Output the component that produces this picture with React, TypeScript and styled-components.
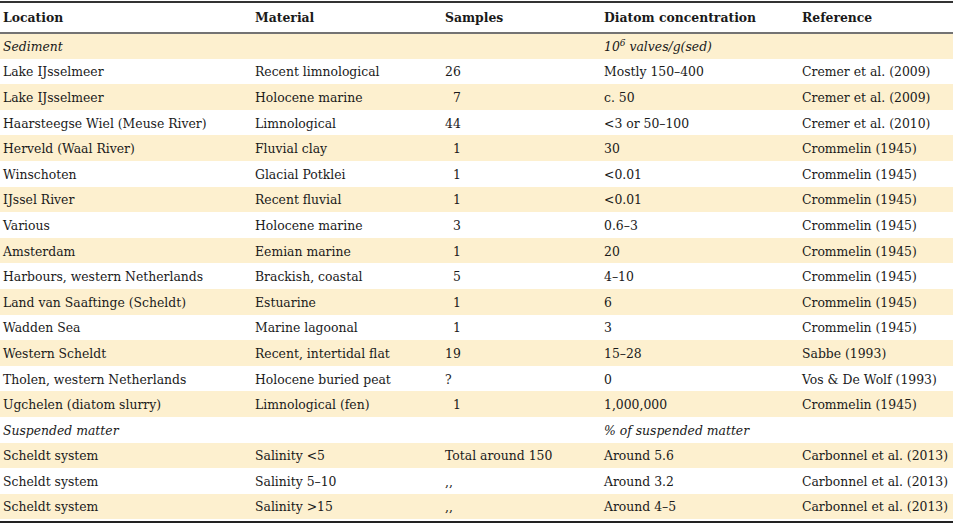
import React from "react";
import styled, { createGlobalStyle } from "styled-components";

const Global = createGlobalStyle`
  html, body { margin: 0; padding: 0; background: #fff; }
  body { font-family: "DejaVu Serif", "Liberation Serif", serif; color: #1a1a1a; }
`;

const Wrap = styled.div`
  width: 953px;
  padding-top: 1px;
`;

const Table = styled.table`
  width: 953px;
  border-collapse: collapse;
  table-layout: fixed;
  border-top: 2px solid #333;
  border-bottom: 2px solid #222;
  font-size: 12.4px;
`;

const Col = styled.col<{ $w: number }>`
  width: ${(p) => p.$w}px;
`;

const HeadRow = styled.tr`
  height: 31px;
  border-bottom: 2px solid #737373;
`;

const Th = styled.th`
  text-align: left;
  font-weight: bold;
  padding: 0 0 0 3px;
  white-space: nowrap;
`;

const Row = styled.tr<{ $alt: boolean }>`
  height: 25.6px;
  background: ${(p) => (p.$alt ? "#fdf0cf" : "#fff")};
`;

const Td = styled.td<{ $italic?: boolean }>`
  padding: 1px 0 0 3px;
  white-space: nowrap;
  font-style: ${(p) => (p.$italic ? "italic" : "normal")};
`;

const Gap = styled.tr`
  height: 3px;
`;

const Sup = styled.sup`
  font-size: 9px;
  line-height: 0;
`;

type R = [string, string, string, React.ReactNode, string, boolean?];

const unit = (
  <>
    10<Sup>6</Sup> valves/g(sed)
  </>
);

const F = "\u2007";

const rows: R[] = [
  ["Sediment", "", "", unit, "", true],
  ["Lake IJsselmeer", "Recent limnological", "26", "Mostly 150–400", "Cremer et al. (2009)"],
  ["Lake IJsselmeer", "Holocene marine", F + "7", "c. 50", "Cremer et al. (2009)"],
  ["Haarsteegse Wiel (Meuse River)", "Limnological", "44", "<3 or 50–100", "Cremer et al. (2010)"],
  ["Herveld (Waal River)", "Fluvial clay", F + "1", "30", "Crommelin (1945)"],
  ["Winschoten", "Glacial Potklei", F + "1", "<0.01", "Crommelin (1945)"],
  ["IJssel River", "Recent fluvial", F + "1", "<0.01", "Crommelin (1945)"],
  ["Various", "Holocene marine", F + "3", "0.6–3", "Crommelin (1945)"],
  ["Amsterdam", "Eemian marine", F + "1", "20", "Crommelin (1945)"],
  ["Harbours, western Netherlands", "Brackish, coastal", F + "5", "4–10", "Crommelin (1945)"],
  ["Land van Saaftinge (Scheldt)", "Estuarine", F + "1", "6", "Crommelin (1945)"],
  ["Wadden Sea", "Marine lagoonal", F + "1", "3", "Crommelin (1945)"],
  ["Western Scheldt", "Recent, intertidal flat", "19", "15–28", "Sabbe (1993)"],
  ["Tholen, western Netherlands", "Holocene buried peat", "?", "0", "Vos & De Wolf (1993)"],
  ["Ugchelen (diatom slurry)", "Limnological (fen)", F + "1", "1,000,000", "Crommelin (1945)"],
  ["Suspended matter", "", "", "% of suspended matter", "", true],
  ["Scheldt system", "Salinity <5", "Total around 150", "Around 5.6", "Carbonnel et al. (2013)"],
  ["Scheldt system", "Salinity 5–10", ",,", "Around 3.2", "Carbonnel et al. (2013)"],
  ["Scheldt system", "Salinity >15", ",,", "Around 4–5", "Carbonnel et al. (2013)"],
];

export default function App() {
  return (
    <Wrap>
      <Global />
      <Table>
        <colgroup>
          <Col $w={252} />
          <Col $w={190} />
          <Col $w={159} />
          <Col $w={198} />
          <Col $w={154} />
        </colgroup>
        <thead>
          <HeadRow>
            <Th>Location</Th>
            <Th>Material</Th>
            <Th>Samples</Th>
            <Th>Diatom concentration</Th>
            <Th>Reference</Th>
          </HeadRow>
        </thead>
        <tbody>
          {rows.map((r, i) => (
            <Row key={i} $alt={i % 2 === 0}>
              <Td $italic={r[5]}>{r[0]}</Td>
              <Td>{r[1]}</Td>
              <Td>{r[2]}</Td>
              <Td $italic={r[5]}>{r[3]}</Td>
              <Td>{r[4]}</Td>
            </Row>
          ))}
          <Gap />
        </tbody>
      </Table>
    </Wrap>
  );
}
